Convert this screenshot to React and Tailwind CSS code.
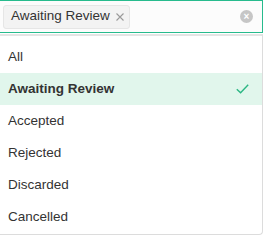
import React, { useState } from "react";

const options = ["All", "Awaiting Review", "Accepted", "Rejected", "Discarded", "Cancelled"];

function Check() {
  return (
    <svg width="13" height="10" viewBox="0 0 13 10" fill="none">
      <path d="M0.8 5.2L4.6 8.8L12.2 0.8" stroke="#2bb683" strokeWidth="1.4" />
    </svg>
  );
}

function Cross() {
  return (
    <svg width="8" height="8" viewBox="0 0 8 8" fill="none">
      <path d="M0.5 0.5L7.5 7.5M7.5 0.5L0.5 7.5" stroke="#9a9a9a" strokeWidth="1.1" />
    </svg>
  );
}

export default function App() {
  const [selected, setSelected] = useState("Awaiting Review");

  return (
    <div className="w-[264px] h-[237px] bg-white overflow-hidden text-[#333] font-['Liberation_Sans',Arial,sans-serif]">
      {/* select box */}
      <div className="w-[263px] h-[33px] flex items-center border border-l-0 border-[#27bb8d] bg-[#fcfcfc] pl-[3px] pr-[9px]">
        {selected && (
          <span className="h-[24px] flex items-center gap-[6px] pl-[7px] pr-[5px] bg-[#f3f3f3] border border-[#e6e6e6] rounded-[3px] text-[13.5px] text-[#333]">
            {selected}
            <Cross />
          </span>
        )}
        <span className="ml-auto w-[13px] h-[13px] rounded-full bg-[#c6c6c6] flex items-center justify-center text-white text-[10px] leading-none font-bold">
          ×
        </span>
      </div>

      {/* dropdown */}
      <div className="mt-[1px] w-[263px] border-t-2 border-t-[#e4e4e4] border-r border-b border-[#dcdcdc] rounded-br-[4px] bg-white pt-[5px] pb-[1px]">
        {options.map((opt) => {
          const active = opt === selected;
          return (
            <div
              key={opt}
              onClick={() => setSelected(opt)}
              className={
                active
                  ? "h-[32px] flex items-center justify-between pl-[8px] pr-[13px] bg-[#e1f6ec] font-bold text-[13.5px]"
                  : "h-[32px] flex items-center justify-between pl-[8px] pr-[13px] text-[13.5px]"
              }
            >
              <span>{opt}</span>
              {active && <Check />}
            </div>
          );
        })}
      </div>
    </div>
  );
}
